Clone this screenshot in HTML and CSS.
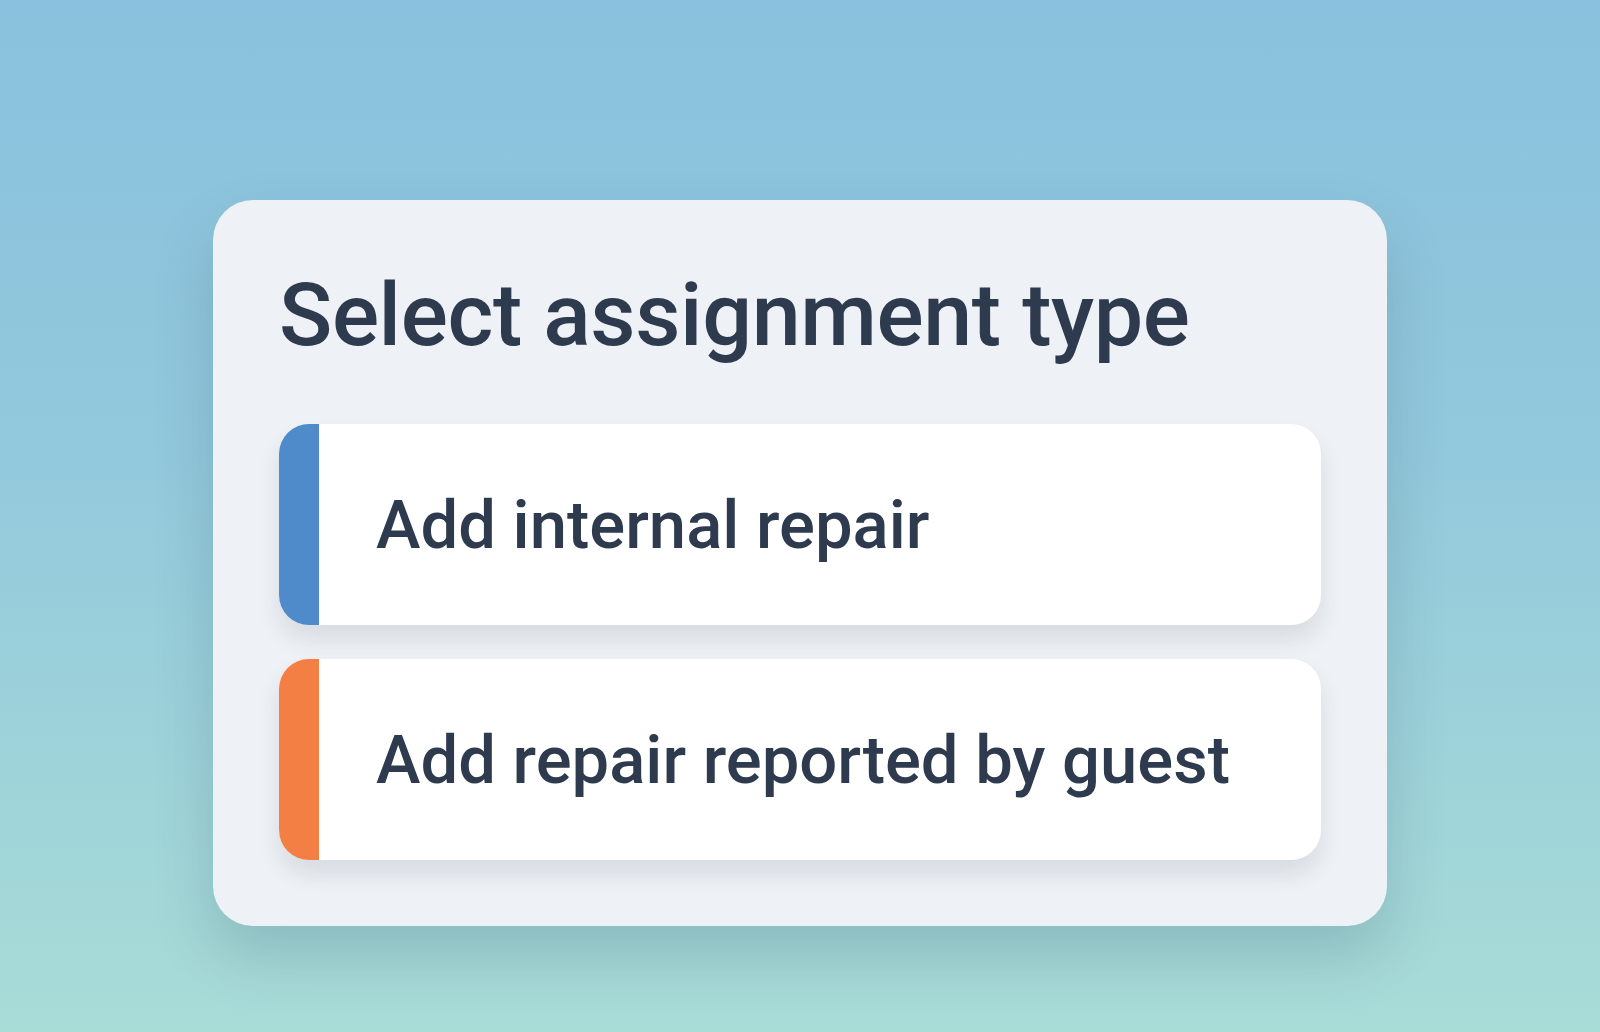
FILE: index.html
```html
<!DOCTYPE html>
<html lang="en">
<head>
    <meta charset="UTF-8">
    <meta name="viewport" content="width=device-width, initial-scale=1.0">
    <title>Select assignment type</title>
    <link rel="stylesheet" href="styles.css">
</head>
<body>
    <div class="page">
        <div class="card">
            <h1>Select assignment type</h1>
            <div class="option internal">
                <span class="bar"></span>
                <span class="label">Add internal repair</span>
            </div>
            <div class="option guest">
                <span class="bar"></span>
                <span class="label">Add repair reported by guest</span>
            </div>
        </div>
    </div>
</body>
</html>
```

FILE: styles.css
```css
html, body {
    height: 100%;
}
body {
    font-family: Roboto, "Noto Sans", Arial, sans-serif;
    margin: 0;
    padding: 0;
    background: linear-gradient(180deg, #89c1de 0%, #93c9dc 45%, #a8dcd7 100%);
    color: #2e3a4d;
}
.page {
    display: flex;
    justify-content: center;
    padding-top: 200px;
}
.card {
    width: 1174px;
    box-sizing: border-box;
    padding: 66px;
    border-radius: 40px;
    background-color: #eef1f5;
    box-shadow: 0 30px 60px rgba(40, 70, 90, 0.2);
}
h1 {
    margin: 0 0 60px;
    font-size: 88px;
    font-weight: 500;
    line-height: 98px;
    letter-spacing: -0.4px;
}
.option {
    display: flex;
    align-items: stretch;
    height: 201px;
    border-radius: 30px;
    background-color: #ffffff;
    overflow: hidden;
    box-shadow: 0 14px 22px rgba(60, 70, 100, 0.12);
    cursor: pointer;
}
.option + .option {
    margin-top: 34px;
}
.bar {
    width: 40px;
    flex-shrink: 0;
}
.internal .bar {
    background-color: #4f8bca;
}
.guest .bar {
    background-color: #f47f45;
}
.label {
    align-self: center;
    padding-left: 57px;
    font-size: 67px;
    font-weight: 500;
}
```
